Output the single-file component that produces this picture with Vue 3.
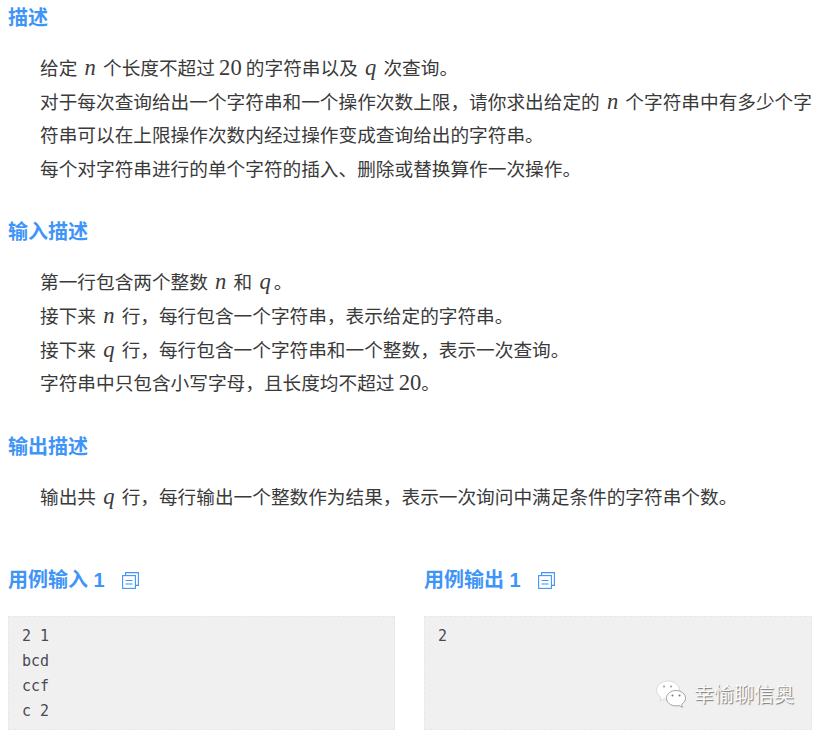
<script setup>
const sections = [
  { title: '描述', cls: 'first', lines: [
    [['给定 '], ['n', 1], [' 个长度不超过 '], ['20', 2], [' 的字符串以及 '], ['q', 1], [' 次查询。']],
    [['对于每次查询给出一个字符串和一个操作次数上限，请你求出给定的 '], ['n', 1], [' 个字符串中有多少个字符串可以在上限操作次数内经过操作变成查询给出的字符串。']],
    [['每个对字符串进行的单个字符的插入、删除或替换算作一次操作。']],
  ]},
  { title: '输入描述', cls: 'second', lines: [
    [['第一行包含两个整数 '], ['n', 1], [' 和 '], ['q', 1], ['。']],
    [['接下来 '], ['n', 1], [' 行，每行包含一个字符串，表示给定的字符串。']],
    [['接下来 '], ['q', 1], [' 行，每行包含一个字符串和一个整数，表示一次查询。']],
    [['字符串中只包含小写字母，且长度均不超过 '], ['20', 2], ['。']],
  ]},
  { title: '输出描述', cls: 'third', lines: [
    [['输出共 '], ['q', 1], [' 行，每行输出一个整数作为结果，表示一次询问中满足条件的字符串个数。']],
  ]},
]
const samples = [
  { title: '用例输入 1', code: '2 1\nbcd\nccf\nc 2' },
  { title: '用例输出 1', code: '2' },
]
</script>

<template>
  <div class="page">
    <section v-for="s in sections" :key="s.title" class="sec" :class="s.cls">
      <h2>{{ s.title }}</h2>
      <div class="body">
        <p v-for="(line, i) in s.lines" :key="i">
          <template v-for="(t, j) in line" :key="j">
            <span v-if="t[1] === 1" class="mi">{{ t[0] }}</span>
            <span v-else-if="t[1] === 2" class="mn">{{ t[0] }}</span>
            <template v-else>{{ t[0] }}</template>
          </template>
        </p>
      </div>
    </section>
    <div class="samples">
      <div v-for="s in samples" :key="s.title" class="sample">
        <h2 class="sample-title">
          {{ s.title }}
          <svg class="copy" width="18" height="18" viewBox="0 0 18 18" fill="none" stroke="#3f95f7" stroke-width="1.1">
            <rect x="0.6" y="4.6" width="12.8" height="12.8" />
            <path d="M3.6 4.400V1.600H16.400V14.400H13.600" />
            <path d="M3.500 9.500H10.500M3.500 13H10.500" />
          </svg>
        </h2>
        <pre class="code">{{ s.code }}</pre>
      </div>
    </div>
    <div class="mark">
      <svg width="32" height="28" viewBox="0 0 32 28">
        <path d="M13 1C6.800 1 1.500 5 1.500 10.200c0 3 1.700 5.400 4.300 7.100L5 21l4.200-2.200c1.300.4 2.500.6 3.800.6 6.200 0 11.500-4 11.500-9.200S19.200 1 13 1z" fill="#fff" stroke="#d0d0d0" stroke-width=".8"/>
        <path d="M21 10.500c-5.400 0-9.500 3.500-9.500 7.700s4.100 7.700 9.500 7.700c1 0 2-.1 3-.4l3.400 1.900-.8-3.100c2.300-1.500 3.900-3.600 3.900-6.100 0-4.200-4.100-7.700-9.500-7.700z" fill="#fff" stroke="#999" stroke-width=".9"/>
        <circle cx="9" cy="6.500" r="1" fill="#999"/><circle cx="16" cy="6.500" r="1" fill="#999"/>
        <circle cx="17.500" cy="15.500" r="1" fill="#777"/><circle cx="24.500" cy="15.500" r="1" fill="#777"/>
      </svg>
      <span>幸愉聊信奥</span>
    </div>
  </div>
</template>

<style scoped>
.page {
  position: relative;
  width: 820px;
  height: 731px;
  overflow: hidden;
  box-sizing: border-box;
  padding: 2px 8px 0;
  font-family: "Noto Sans CJK SC", "Liberation Sans", sans-serif;
  color: #333;
  background: #fff;
}
h2 {
  margin: 0;
  font-size: 20px;
  line-height: 30px;
  font-weight: 700;
  color: #3f95f7;
}
.sec.second, .sec.third { margin-top: 32px; }
.body {
  margin-top: 18px;
  padding-left: 32px;
}
p {
  margin: 0;
  font-size: 18.67px;
  line-height: 33.6px;
  color: #3a3a3a;
}
.mi {
  font-family: "Liberation Serif", serif;
  font-style: italic;
  font-size: 22.6px;
  line-height: 0;
  padding: 0 3px;
}
.mn {
  font-family: "Liberation Serif", serif;
  font-size: 22.6px;
  line-height: 0;
}
.samples {
  display: grid;
  grid-template-columns: 387px 388px;
  column-gap: 29px;
  margin-top: 53px;
}
.sample-title {
  display: flex;
  align-items: center;
  gap: 17px;
  font-family: "Liberation Sans", "Noto Sans CJK SC", sans-serif;
}
.code {
  margin: 21px 0 0;
  height: 114px;
  box-sizing: border-box;
  padding: 7px 13px;
  background: #f0f0f0;
  border: 1px dashed #e8e8e8;
  font-family: "DejaVu Sans Mono", monospace;
  font-size: 15px;
  line-height: 25px;
  color: #4a4a55;
}
.mark {
  position: absolute;
  left: 655px;
  top: 680px;
  display: flex;
  align-items: center;
  gap: 7px;
}
.mark span {
  font-size: 20px;
  line-height: 28px;
  color: #fafafa;
  text-shadow: 1px 1px 1px #777;
}
</style>
